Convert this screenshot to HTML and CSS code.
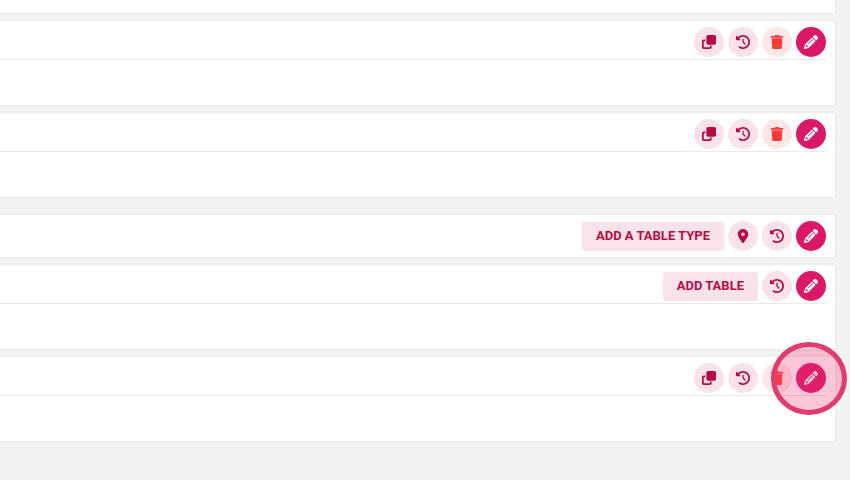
FILE: index.html
```html
<!DOCTYPE html>
<html lang="en">
<head>
<meta charset="utf-8">
<meta name="viewport" content="width=device-width, initial-scale=1">
<title>Tables</title>
<link rel="stylesheet" href="styles.css">
</head>
<body>
<svg class="sprite" aria-hidden="true">
  <symbol id="clone" viewBox="0 0 512 512"><path d="M288 448H64V224h64V160H64c-35.300 0-64 28.700-64 64V448c0 35.300 28.700 64 64 64H288c35.300 0 64-28.700 64-64V384H288v64zm-64-96H448c35.300 0 64-28.700 64-64V64c0-35.300-28.700-64-64-64H224c-35.300 0-64 28.700-64 64V288c0 35.300 28.700 64 64 64z"/></symbol>
  <symbol id="history" viewBox="0 0 512 512"><path d="M75 75L41 41C25.900 25.900 0 36.600 0 57.900V168c0 13.300 10.700 24 24 24H134.100c21.400 0 32.100-25.900 17-41l-30.800-30.800C155 85.500 203 64 256 64c106 0 192 86 192 192s-86 192-192 192c-40.800 0-78.600-12.700-109.700-34.400c-14.500-10.100-34.400-6.600-44.600 7.900s-6.600 34.400 7.900 44.600C151.200 495 201.700 512 256 512c141.400 0 256-114.600 256-256S397.400 0 256 0C185.300 0 121.300 28.700 75 75zm181 53c-13.300 0-24 10.700-24 24V256c0 6.400 2.500 12.500 7 17l72 72c9.400 9.400 24.600 9.400 33.900 0s9.400-24.600 0-33.900l-65-65V152c0-13.300-10.700-24-24-24z"/></symbol>
  <symbol id="trash" viewBox="0 0 448 512"><path d="M144 10L132 32H20Q0 32 0 52V76Q0 96 20 96H428Q448 96 448 76V52Q448 32 428 32H316L304 10Q298 0 286 0H162Q150 0 144 10zM32 122L48 472Q50 512 90 512H358Q398 512 400 472L416 122z"/></symbol>
  <symbol id="pin" viewBox="0 0 384 512"><path d="M215.700 499.200C267 435 384 279.400 384 192C384 86 298 0 192 0S0 86 0 192c0 87.400 117 243 168.300 307.200c12.300 15.300 35.100 15.300 47.400 0zM192 128a64 64 0 1 1 0 128 64 64 0 1 1 0-128z"/></symbol>
  <symbol id="pencil" viewBox="0 0 512 512"><path d="M410.300 231l11.300-11.300-33.900-33.900-62.100-62.100L291.700 89.800l-11.300 11.300-22.600 22.600L58.600 322.900c-10.400 10.400-18 23.300-22.200 37.400L1 480.700c-2.500 8.400-.2 17.500 6.100 23.700s15.300 8.500 23.700 6.100l120.300-35.400c14.100-4.200 27-11.800 37.400-22.200L387.700 253.700 410.300 231zM160 399.400l-9.100 22.700c-4 3.100-8.500 5.400-13.300 6.900L59.400 452l23-78.100c1.400-4.900 3.800-9.400 6.900-13.300l22.700-9.100v32c0 8.800 7.200 16 16 16h32zM362.700 18.700L348.300 33.200 325.700 55.800 314.300 67.100l33.900 33.900 62.100 62.100 33.900 33.900 11.300-11.300 22.600-22.600 14.500-14.500c25-25 25-65.500 0-90.500L453.300 18.700c-25-25-65.500-25-90.500 0zm-47.400 168l-144 144c-6.200 6.200-16.400 6.200-22.600 0s-6.200-16.400 0-22.600l144-144c6.200-6.200 16.400-6.200 22.600 0s6.200 16.400 0 22.600z"/></symbol>
</svg>
<main class="cards">
  <section class="card card-tail"></section>
  <section class="card">
    <header class="actions divided">
      <button class="icon-btn" type="button" aria-label="Duplicate"><svg><use href="#clone"/></svg></button>
      <button class="icon-btn" type="button" aria-label="History"><svg><use href="#history"/></svg></button>
      <button class="icon-btn delete" type="button" aria-label="Delete"><svg><use href="#trash"/></svg></button>
      <button class="icon-btn edit" type="button" aria-label="Edit"><svg><use href="#pencil"/></svg></button>
    </header>
    <div class="content"></div>
  </section>
  <section class="card">
    <header class="actions divided">
      <button class="icon-btn" type="button" aria-label="Duplicate"><svg><use href="#clone"/></svg></button>
      <button class="icon-btn" type="button" aria-label="History"><svg><use href="#history"/></svg></button>
      <button class="icon-btn delete" type="button" aria-label="Delete"><svg><use href="#trash"/></svg></button>
      <button class="icon-btn edit" type="button" aria-label="Edit"><svg><use href="#pencil"/></svg></button>
    </header>
    <div class="content"></div>
  </section>
  <section class="card group-start">
    <header class="actions">
      <button class="text-btn" type="button">ADD A TABLE TYPE</button>
      <button class="icon-btn" type="button" aria-label="Location"><svg><use href="#pin"/></svg></button>
      <button class="icon-btn" type="button" aria-label="History"><svg><use href="#history"/></svg></button>
      <button class="icon-btn edit" type="button" aria-label="Edit"><svg><use href="#pencil"/></svg></button>
    </header>
  </section>
  <section class="card">
    <header class="actions divided">
      <button class="text-btn" type="button">ADD TABLE</button>
      <button class="icon-btn" type="button" aria-label="History"><svg><use href="#history"/></svg></button>
      <button class="icon-btn edit" type="button" aria-label="Edit"><svg><use href="#pencil"/></svg></button>
    </header>
    <div class="content"></div>
  </section>
  <section class="card">
    <header class="actions divided">
      <button class="icon-btn" type="button" aria-label="Duplicate"><svg><use href="#clone"/></svg></button>
      <button class="icon-btn" type="button" aria-label="History"><svg><use href="#history"/></svg></button>
      <button class="icon-btn delete" type="button" aria-label="Delete"><svg><use href="#trash"/></svg></button>
      <button class="icon-btn edit highlighted" type="button" aria-label="Edit"><svg><use href="#pencil"/></svg></button>
    </header>
    <div class="content"></div>
  </section>
</main>
</body>
</html>
```
FILE: styles.css
```css
* {
  box-sizing: border-box;
}

body {
  margin: 0;
  background: #f3f3f3;
  font-family: Roboto, "Liberation Sans", sans-serif;
}

.sprite {
  display: none;
}

.cards {
  display: flex;
  flex-direction: column;
  gap: 8px;
  padding-right: 15px;
  padding-bottom: 16px;
}

.card {
  padding-right: 9px;
  background: #fff;
  border-radius: 0 3px 3px 0;
  box-shadow: 0 0 0 2px #eeeeee;
}

.card-tail {
  min-height: 13px;
  border-top-right-radius: 0;
}

.group-start {
  margin-top: 10px;
}

.actions {
  display: flex;
  align-items: center;
  justify-content: flex-end;
  gap: 4px;
  padding: 6px 0;
}

.divided {
  padding-bottom: 2px;
  border-bottom: 1px solid #eaeaea;
}

.content {
  min-height: 45px;
}

button {
  border: 0;
  background: #fae2eb;
  color: #b70b41;
  font-family: inherit;
  cursor: pointer;
}

.icon-btn {
  position: relative;
  display: grid;
  place-items: center;
  width: 30px;
  height: 30px;
  padding: 0;
  border-radius: 50%;
}

.icon-btn svg {
  width: 14px;
  height: 14px;
  fill: currentColor;
}

.text-btn {
  height: 29px;
  padding: 0 14px 2px;
  border-radius: 3px;
  font-size: 13px;
  font-weight: 700;
  line-height: 27px;
}

.delete {
  background: #fee7e6;
  color: #f83b38;
}

.edit {
  background: #db1768;
  color: #fff;
}

/* Ring drawn around the button the user should press */
.highlighted::after {
  content: "";
  position: absolute;
  inset: -21px -21px -22px -25px;
  border: 5px solid #e03c72;
  border-radius: 50%;
  background: rgba(240, 50, 112, 0.28);
}
```
